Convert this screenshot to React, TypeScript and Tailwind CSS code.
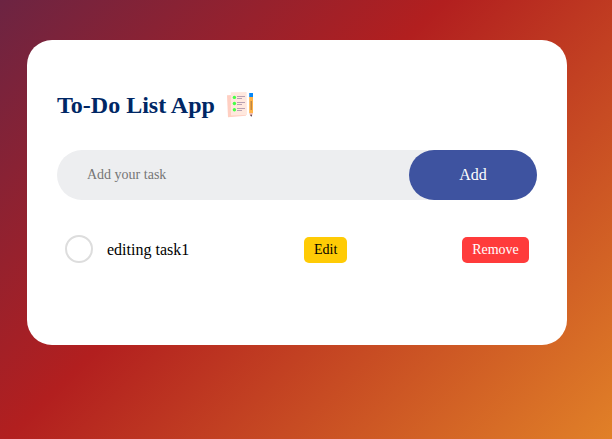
import React from "react";

function NotesIcon() {
  return (
    <svg className="ml-[11px] h-[30px] w-[30px] shrink-0" viewBox="0 0 30 30" aria-hidden="true">
      <path d="M1 5.2 17 4.5 20 25.8 2 27.2Z" fill="#ffcfc2" />
      <path d="M4.8 2.2 20.6 2 21 25 5 25.6Z" fill="#ffe8de" />
      <g fill="#46ff46">
        <circle cx="8.4" cy="7.4" r="1.7" />
        <circle cx="8.4" cy="13.5" r="1.7" />
        <circle cx="8.4" cy="19.8" r="1.7" />
      </g>
      <g stroke="#b7a0b2" strokeWidth="1">
        <path d="M11 6.5h8M11 8.5h5M11 12.5h8M11 14.5h5M11 18.5h8M11 20.5h5" />
      </g>
      <path d="M23.2 3h3.8v4h-3.8Z" fill="#0787f7" />
      <path d="M23.2 7h3.8v16h-3.8Z" fill="#ffb347" />
      <path d="M25.2 11v9" stroke="#986b43" strokeWidth="0.9" />
      <path d="M23.2 23h3.8l-1 3h-1.8Z" fill="#f4bfb6" />
      <path d="M24.3 24.7h1.7l-.8 2.2Z" fill="#392937" />
    </svg>
  );
}

export default function App() {
  return (
    <main className="min-h-screen bg-[linear-gradient(135deg,#1a2a6c_-370px,#b21f1f_315px,#fdbb2d_1001px)] pl-[27px] pt-10 font-['Liberation_Serif','Times_New_Roman',serif] text-black">
      <section className="h-[305px] w-[540px] rounded-[25px] bg-white px-[30px] pt-[50px]">
        <h2 className="flex h-[30px] items-center text-[24px] font-bold text-[#002765]">
          To-Do List App
          <NotesIcon />
        </h2>
        <div className="mt-[30px] flex h-[50px] items-center rounded-[30px] bg-[#edeef0] pl-[30px]">
          <input
            type="text"
            placeholder="Add your task"
            className="min-w-0 flex-1 bg-transparent pb-[2px] text-[14px] outline-none placeholder:text-[#757575]"
          />
          <button className="h-[50px] w-32 rounded-[40px] bg-[#3e53a0] text-base text-white">Add</button>
        </div>
        <ul className="mt-[30px]">
          <li className="flex h-10 items-center justify-between px-2">
            <label className="flex items-center gap-[14px] text-[16px]">
              <span className="mb-[2px] h-7 w-7 rounded-full border-2 border-[#dddddd]" />
              editing task1
            </label>
            <button className="h-[26px] w-[43px] rounded-[5px] bg-[#ffcb05] pb-[2px] text-[14px]">Edit</button>
            <button className="h-[26px] w-[67px] rounded-[5px] bg-[#ff3b3b] pb-[2px] text-[14px] text-white">Remove</button>
          </li>
        </ul>
      </section>
    </main>
  );
}
